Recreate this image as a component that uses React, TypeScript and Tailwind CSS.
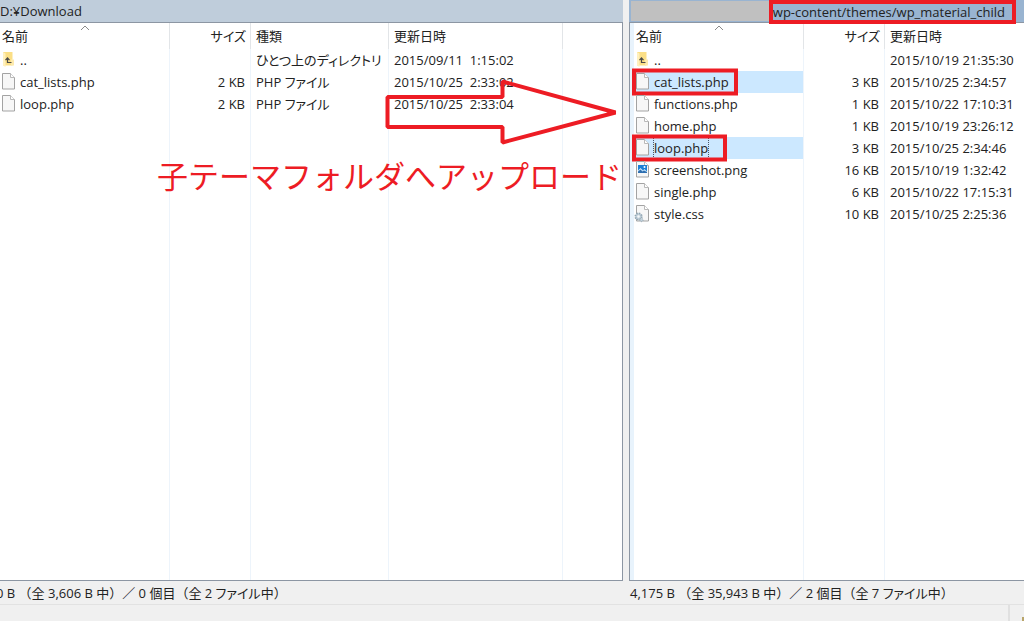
import type { ReactNode } from 'react';
import clsx from 'clsx';

type IconKind = 'up' | 'file' | 'image' | 'css';

interface Entry {
  name: string;
  icon: IconKind;
  size?: string;
  type?: string;
  date?: string;
  selected?: boolean;
  focused?: boolean;
  marked?: boolean;
}

interface Column {
  key: 'name' | 'size' | 'type' | 'date';
  label: string;
  width: string;
}

const localColumns: Column[] = [
  { key: 'name', label: '名前', width: 'w-[170px]' },
  { key: 'size', label: 'サイズ', width: 'w-[81px]' },
  { key: 'type', label: '種類', width: 'w-[138px]' },
  { key: 'date', label: '更新日時', width: 'w-[174px]' },
];

const remoteColumns: Column[] = [
  { key: 'name', label: '名前', width: 'w-[170px]' },
  { key: 'size', label: 'サイズ', width: 'w-[81px]' },
  { key: 'date', label: '更新日時', width: 'w-auto' },
];

const localFiles: Entry[] = [
  { name: '..', icon: 'up', type: 'ひとつ上のディレクトリ', date: '2015/09/11  1:15:02' },
  { name: 'cat_lists.php', icon: 'file', size: '2 KB', type: 'PHP ファイル', date: '2015/10/25  2:33:02' },
  { name: 'loop.php', icon: 'file', size: '2 KB', type: 'PHP ファイル', date: '2015/10/25  2:33:04' },
];

const remoteFiles: Entry[] = [
  { name: '..', icon: 'up', date: '2015/10/19 21:35:30' },
  { name: 'cat_lists.php', icon: 'file', size: '3 KB', date: '2015/10/25 2:34:57', selected: true, marked: true },
  { name: 'functions.php', icon: 'file', size: '1 KB', date: '2015/10/22 17:10:31' },
  { name: 'home.php', icon: 'file', size: '1 KB', date: '2015/10/19 23:26:12' },
  { name: 'loop.php', icon: 'file', size: '3 KB', date: '2015/10/25 2:34:46', selected: true, focused: true, marked: true },
  { name: 'screenshot.png', icon: 'image', size: '16 KB', date: '2015/10/19 1:32:42' },
  { name: 'single.php', icon: 'file', size: '6 KB', date: '2015/10/22 17:15:31' },
  { name: 'style.css', icon: 'css', size: '10 KB', date: '2015/10/25 2:25:36' },
];

function FileIcon({ kind }: { kind: IconKind }) {
  if (kind === 'up') {
    return (
      <svg width="16" height="18" viewBox="0 0 16 18" className="shrink-0" aria-hidden="true">
        <path d="M3 1h9.500v13.500H3z" fill="#fbdf86" />
        <path d="M11 8.500h3v6h-3z" fill="#fdeaae" />
        <path d="M3 1l2.500 1.500V16L3 14.500z" fill="#fff0bd" />
        <path d="M7.500 12V7M5.500 9.200l2-2.200 2 2.200M7.500 11.500h4" fill="none" stroke="#4a4a4a" strokeWidth="1.200" />
      </svg>
    );
  }
  return (
    <svg width="16" height="18" viewBox="0 0 16 18" className="shrink-0" aria-hidden="true">
      <path d="M2.500.5h8l4 4v11.500h-12z" fill="#f7f7f7" stroke="#a3a3a3" />
      <path d="M10.500.5v4h4" fill="#fff" stroke="#b9b9b9" />
      {kind === 'image' && (
        <>
          <path d="M4 4h9v8H4z" fill="#1b7fd6" />
          <path d="M4 12V9.500L6.500 7l2.500 2.500 1.500-1.500L13 10.500V12z" fill="#cfe8fb" />
          <path d="M4 12v-1.500l2.500-2 2 2 1.500-1 3 1.500v1z" fill="#2f6fb0" />
          <circle cx="10.500" cy="6" r="1" fill="#fff" />
        </>
      )}
      {kind === 'css' && (
        <>
          <circle cx="4.500" cy="11.500" r="3.200" fill="#c3d2dc" stroke="#93a7b4" strokeWidth="1.800" strokeDasharray="1.500 1" />
          <circle cx="4.500" cy="11.500" r="1.200" fill="#f5f8fa" />
          <circle cx="7.500" cy="15" r="1.600" fill="#c3d2dc" stroke="#93a7b4" strokeDasharray="1 .8" />
        </>
      )}
    </svg>
  );
}

function Cell({ column, entry }: { column: Column; entry: Entry }) {
  if (column.key !== 'name') return <>{entry[column.key]}</>;
  return (
    <div className="relative flex items-center gap-1">
      <FileIcon kind={entry.icon} />
      <span className={clsx(entry.focused && 'outline-1 outline-dotted outline-gray-600')}>{entry.name}</span>
      {entry.marked && (
        <span
          className={clsx(
            'absolute -left-0.5 top-1/2 h-[27px] -translate-y-1/2 border-4 border-[#ed1c24]',
            entry.focused ? 'w-[95px]' : 'w-[106px]',
          )}
        />
      )}
    </div>
  );
}

interface FileTableProps {
  label: string;
  columns: Column[];
  entries: Entry[];
  trailing?: boolean;
}

function FileTable({ label, columns, entries, trailing }: FileTableProps) {
  const line = 'border-r border-[#edf4fb]';
  return (
    <table aria-label={label} className="h-full w-full table-fixed border-separate border-spacing-0 whitespace-pre">
      <thead>
        <tr className="h-[26px]">
          {columns.map((col, i) => (
            <th
              key={col.key}
              className={clsx(
                'relative p-0 font-normal',
                col.width,
                (trailing || i < columns.length - 1) && 'border-r border-[#e2e5e8]',
              )}
            >
              <button
                type="button"
                className={clsx(
                  'block w-full',
                  col.key === 'size' ? 'pr-1 text-right' : 'text-left',
                  col.key === 'name' && 'pl-0.5',
                  col.key !== 'name' && col.key !== 'size' && 'pl-[5px]',
                )}
              >
                {col.label}
              </button>
              {col.key === 'name' && (
                <svg width="10" height="6" viewBox="0 0 10 6" className="absolute left-1/2 top-0.5 -translate-x-1/2" aria-hidden="true">
                  <path d="M1 5l4-4 4 4" fill="none" stroke="#8a8a8a" />
                </svg>
              )}
            </th>
          ))}
          {trailing && <td />}
        </tr>
      </thead>
      <tbody>
        {entries.map((entry) => (
          <tr key={entry.name} className="h-[22px]">
            {columns.map((col, i) => (
              <td
                key={col.key}
                className={clsx(
                  'p-0',
                  col.key === 'size' && 'pr-[5px] text-right',
                  (col.key === 'type' || col.key === 'date') && 'pl-[5px]',
                  (trailing || i < columns.length - 1) && line,
                  col.key === 'name' && entry.selected && 'bg-[#cce8ff]',
                )}
              >
                <Cell column={col} entry={entry} />
              </td>
            ))}
            {trailing && <td />}
          </tr>
        ))}
        <tr>
          {columns.map((col, i) => (
            <td key={col.key} className={clsx((trailing || i < columns.length - 1) && line)} />
          ))}
          {trailing && <td />}
        </tr>
      </tbody>
    </table>
  );
}

function Pane({ title, children }: { title: ReactNode; children: ReactNode }) {
  return (
    <section className="flex min-w-0 flex-col overflow-hidden">
      {title}
      <div className="min-h-0 flex-1 border-y border-[#8c96a3] bg-white">{children}</div>
    </section>
  );
}

function Files() {
  return <span className="[font-feature-settings:'palt']">ファイル</span>;
}

export default function App() {
  return (
    <div className="relative flex h-screen flex-col overflow-hidden bg-[#f0f0f0] font-['Open_Sans','Noto_Sans_CJK_JP',sans-serif] text-[13px] leading-5 text-[#222]">
      <main className="grid min-h-0 flex-1 grid-cols-[623fr_6px_395fr] [font-feature-settings:'palt']">
        <Pane title={<h2 className="h-[22px] bg-[#bfcddb] leading-[22px]">D:¥Download</h2>}>
          <div className="h-full border-r border-[#8c96a3]">
            <FileTable label="ローカル" columns={localColumns} entries={localFiles} trailing />
          </div>
        </Pane>
        <div />
        <Pane
          title={
            <div className="flex h-[22px] bg-[#99b4d1] pl-0.5">
              <div className="my-px flex-1 bg-[#c0c0c0]" />
              <h2 className="relative z-10 mr-2 h-6 border-4 border-[#ed1c24] pr-[7px] leading-4">
                wp-content/themes/wp_material_child
              </h2>
            </div>
          }
        >
          <div className="h-full border-l border-[#8c96a3]">
            <div className="h-full border-l-4 border-[#e8f3fc]">
              <FileTable label="リモート" columns={remoteColumns} entries={remoteFiles} />
            </div>
          </div>
        </Pane>
      </main>

      <footer className="shrink-0">
        <div className="grid h-6 grid-cols-[629fr_395fr] items-center whitespace-pre border-b border-[#e2e2e2]">
          <p className="-ml-1">0 B （全 3,606 B 中）／ 0 個目（全 2 <Files />中）</p>
          <p className="pl-px">4,175 B （全 35,943 B 中）／ 2 個目（全 7 <Files />中）</p>
        </div>
        <div className="flex h-4 justify-end">
          <div className="flex w-4 items-end justify-end border-l-2 border-[#e0e0e0]">
            <div className="h-1 w-0.5 bg-[#b9a56a]" />
          </div>
        </div>
      </footer>

      <svg width="240" height="72" viewBox="0 0 240 72" className="absolute left-[382px] top-[76px]" aria-hidden="true">
        <path d="M5.500 21h115V5.500l113 31-113 30V51h-115z" fill="none" stroke="#ed1c24" strokeWidth="4" strokeLinejoin="bevel" />
      </svg>
      <p className="absolute left-[157px] top-[156px] whitespace-nowrap text-[31px] leading-10 text-[#ed1c24]">
        子テーマフォルダへアップロード
      </p>
    </div>
  );
}
